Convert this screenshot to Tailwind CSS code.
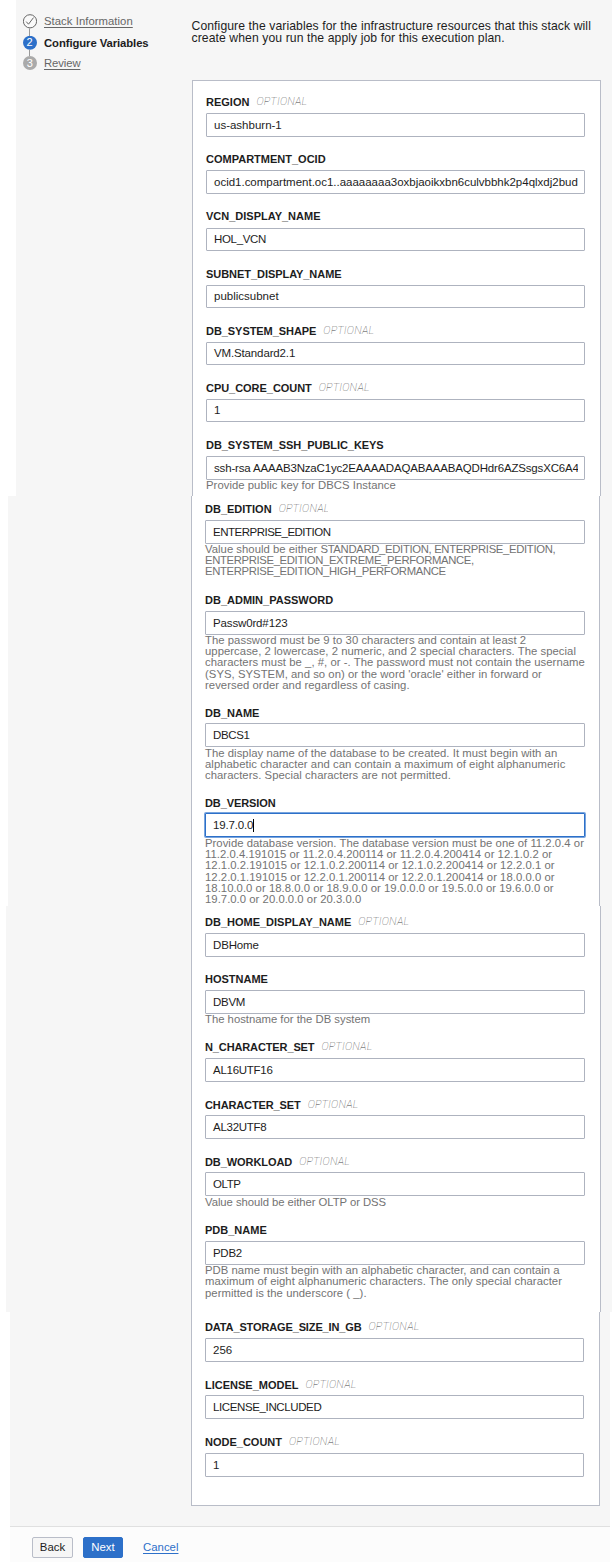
<!DOCTYPE html>
<html lang="en">
<head>
<meta charset="utf-8">
<title>Configure Variables</title>
<script src="https://cdn.jsdelivr.net/npm/@tailwindcss/browser@4"></script>
</head>
<body class="h-[1568px] w-[612px] overflow-hidden bg-white font-['Liberation_Sans',Arial,sans-serif] text-[#1d1d1d]">

<!-- Stack header, steps and first variables -->
<section class="ml-[16px] flex h-[496px] bg-[#f6f6f6]">
  <nav class="w-[175.5px] shrink-0 pl-[7px] pt-[14px]">
    <ol class="text-[11.3px] leading-[14px] text-[#666]">
      <li class="flex h-[22px] gap-[7px]"><svg class="h-[22px] w-[14px] shrink-0" viewBox="0 0 14 22" fill="none" stroke="#666"><path d="M6.5 14.5v7.5" stroke="#999"/><circle cx="7" cy="7.3" r="6.6" fill="#fafafa"/><path d="M3.2 7.6l2.3 2.6 5-6.6"/></svg><a class="tracking-[0.05px] underline underline-offset-2">Stack Information</a></li>
      <li class="flex h-[20px] gap-[7px] font-bold text-[#1d1d1d]"><svg class="h-[20px] w-[14px] shrink-0" viewBox="0 0 14 20"><path d="M6.5 14v6" stroke="#999"/><circle cx="7" cy="6.8" r="7" fill="#2d70c9"/><text x="3.6" y="10.2" font-size="11" font-weight="400" fill="#fff">2</text></svg><span class="tracking-[-0.08px]">Configure Variables</span></li>
      <li class="flex gap-[7px]"><svg class="h-[14px] w-[14px] shrink-0" viewBox="0 0 14 14"><circle cx="7" cy="7" r="7" fill="#aaa"/><text x="3.8" y="10.6" font-size="11" fill="#fff">3</text></svg><a class="tracking-[-0.1px] underline underline-offset-2">Review</a></li>
    </ol>
  </nav>
  <div class="w-[409px]">
    <p class="h-[80px] pt-[20px] whitespace-nowrap text-[12.2px] leading-[12.4px] tracking-[0.085px]">Configure the variables for the infrastructure resources that this stack will<br>create when you run the apply job for this execution plan.</p>
    <div class="h-[416px] border border-b-0 border-[#b9bdc8] bg-white pt-[13px] pl-[13.5px]">
      <div class="h-[57px] w-[379px]"><div class="flex h-[19px] gap-[7px] text-[11px] leading-[16px]"><b>REGION</b><i class="font-['Roboto'] font-thin leading-[15px] tracking-[0.2px] text-[#444]">OPTIONAL</i></div><div class="h-[24px] overflow-hidden rounded-[1px] border border-[#aeb3bf] bg-white px-[7px] text-[11.5px] leading-[23px] whitespace-nowrap">us-ashburn-1</div></div>
      <div class="h-[58px] w-[379px]"><div class="flex h-[19px] gap-[7px] text-[11px] leading-[16px]"><b>COMPARTMENT_OCID</b></div><div class="h-[24px] overflow-hidden rounded-[1px] border border-[#aeb3bf] bg-white px-[7px] text-[11.5px] leading-[23px] tracking-[-0.01px] whitespace-nowrap">ocid1.compartment.oc1..aaaaaaaa3oxbjaoikxbn6culvbbhk2p4qlxdj2bud</div></div>
      <div class="h-[57px] w-[379px]"><div class="flex h-[19px] gap-[7px] text-[11px] leading-[15px]"><b>VCN_DISPLAY_NAME</b></div><div class="h-[23px] overflow-hidden rounded-[1px] border border-[#aeb3bf] bg-white px-[7px] text-[11.5px] leading-[21px] tracking-[-0.33px] whitespace-nowrap">HOL_VCN</div></div>
      <div class="h-[57px] w-[379px]"><div class="flex h-[19px] gap-[7px] text-[11px] leading-[16px]"><b class="tracking-[-0.05px]">SUBNET_DISPLAY_NAME</b></div><div class="h-[23px] overflow-hidden rounded-[1px] border border-[#aeb3bf] bg-white px-[7px] text-[11.5px] leading-[21px] whitespace-nowrap">publicsubnet</div></div>
      <div class="h-[57px] w-[379px]"><div class="flex h-[19px] gap-[7px] text-[11px] leading-[16px]"><b class="tracking-[-0.06px]">DB_SYSTEM_SHAPE</b><i class="font-['Roboto'] font-thin leading-[15px] tracking-[0.2px] text-[#444]">OPTIONAL</i></div><div class="h-[23px] overflow-hidden rounded-[1px] border border-[#aeb3bf] bg-white px-[7px] text-[11.5px] leading-[21px] tracking-[-0.14px] whitespace-nowrap">VM.Standard2.1</div></div>
      <div class="h-[57px] w-[379px]"><div class="flex h-[19px] gap-[7px] text-[11px] leading-[16px]"><b class="tracking-[-0.04px]">CPU_CORE_COUNT</b><i class="font-['Roboto'] font-thin leading-[15px] tracking-[0.2px] text-[#444]">OPTIONAL</i></div><div class="h-[23px] overflow-hidden rounded-[1px] border border-[#aeb3bf] bg-white px-[7px] text-[11.5px] leading-[21px] whitespace-nowrap">1</div></div>
      <div class="w-[379px]"><div class="flex h-[19px] gap-[7px] text-[11px] leading-[16px]"><b class="tracking-[-0.06px]">DB_SYSTEM_SSH_PUBLIC_KEYS</b></div><div class="h-[24px] overflow-hidden rounded-[1px] border border-[#aeb3bf] bg-white pr-[6px] pl-[7px] text-[11.5px] leading-[23px] tracking-[-0.17px] whitespace-nowrap"><div class="overflow-hidden">ssh-rsa AAAAB3NzaC1yc2EAAAADAQABAAABAQDHdr6AZSsgsXC6A4J</div></div><p class="text-[11.3px] leading-[11.2px] tracking-[0.04px] whitespace-nowrap text-[#737373]">Provide public key for DBCS Instance</p></div>
    </div>
  </div>
</section>

<!-- Database edition, password, name and version -->
<section class="ml-[8px] flex h-[410px] bg-[#f6f6f6] pl-[183px]">
  <div class="w-[409px] border-x border-[#b9bdc8] bg-white pt-[5px] pl-[13px]">
    <div class="h-[91px] w-[380px]"><div class="flex h-[19px] gap-[7px] text-[11px] leading-[16px]"><b>DB_EDITION</b><i class="w-[49px] overflow-hidden font-['Roboto'] font-thin leading-[15px] tracking-[0.2px] text-[#444]">OPTIONAL</i></div><div class="h-[24px] overflow-hidden rounded-[1px] border border-[#aeb3bf] bg-white px-[7px] text-[11.5px] leading-[23px] tracking-[-0.5px] whitespace-nowrap">ENTERPRISE_EDITION</div><p class="text-[11.3px] leading-[11.2px] tracking-[-0.35px] whitespace-nowrap text-[#737373]"><span class="tracking-[0.03px]">Value should be either </span><span class="tracking-[-0.33px]">STANDARD_EDITION, ENTERPRISE_EDITION,</span><br>ENTERPRISE_EDITION_EXTREME_PERFORMANCE,<br>ENTERPRISE_EDITION_HIGH_PERFORMANCE</p></div>
    <div class="h-[112px] w-[380px]"><div class="flex h-[19px] gap-[7px] text-[11px] leading-[16px]"><b>DB_ADMIN_PASSWORD</b></div><div class="h-[24px] overflow-hidden rounded-[1px] border border-[#aeb3bf] bg-white px-[7px] text-[11.5px] leading-[22px] tracking-[-0.14px] whitespace-nowrap">Passw0rd#123</div><p class="text-[11.3px] leading-[11.2px] tracking-[0.045px] whitespace-nowrap text-[#737373]">The password must be 9 to 30 characters and contain at least 2<br>uppercase, 2 lowercase, 2 numeric, and 2 special characters. The special<br>characters must be _, #, or -. The password must not contain the username<br>(SYS, SYSTEM, and so on) or the word 'oracle' either in forward or<br>reversed order and regardless of casing.</p></div>
    <div class="h-[90px] w-[380px]"><div class="flex h-[19px] gap-[7px] text-[11px] leading-[18px]"><b>DB_NAME</b></div><div class="h-[24px] overflow-hidden rounded-[1px] border border-[#aeb3bf] bg-white px-[7px] text-[11.5px] leading-[23px] tracking-[-0.35px] whitespace-nowrap">DBCS1</div><p class="pt-px text-[11.3px] leading-[11.2px] tracking-[0.045px] whitespace-nowrap text-[#737373]">The display name of the database to be created. It must begin with an<br>alphabetic character and can contain a maximum of eight alphanumeric<br>characters. Special characters are not permitted.</p></div>
    <div class="w-[380px]"><div class="flex h-[19px] gap-[7px] text-[11px] leading-[18px]"><b class="tracking-[-0.1px]">DB_VERSION</b></div><div class="flex h-[24px] items-center rounded-[1px] border border-[#2d70c9] bg-white px-[7px] text-[11.5px] leading-[23px] tracking-[-0.15px] whitespace-nowrap shadow-[0_0_0_1px_#79a5de]">19.7.0.0<span class="h-[13px] w-px bg-black"></span></div><p class="pt-px text-[11.3px] leading-[11.2px] tracking-[0.035px] whitespace-nowrap text-[#737373]">Provide database version. The database version must be one of 11.2.0.4 or<br>11.2.0.4.191015 or 11.2.0.4.200114 or 11.2.0.4.200414 or 12.1.0.2 or<br>12.1.0.2.191015 or 12.1.0.2.200114 or 12.1.0.2.200414 or 12.2.0.1 or<br>12.2.0.1.191015 or 12.2.0.1.200114 or 12.2.0.1.200414 or 18.0.0.0 or<br>18.10.0.0 or 18.8.0.0 or 18.9.0.0 or 19.0.0.0 or 19.5.0.0 or 19.6.0.0 or<br>19.7.0.0 or 20.0.0.0 or 20.3.0.0</p></div>
  </div>
</section>

<!-- Home, host, character sets, workload and PDB -->
<section class="ml-[6px] flex h-[406px] bg-[#f6f6f6] pl-[185px]">
  <div class="w-[410px] border-x border-[#b9bdc8] bg-white pt-[8px] pl-[13px]">
    <div class="h-[57px] w-[380px]"><div class="flex h-[19px] gap-[7px] text-[11px] leading-[16px]"><b>DB_HOME_DISPLAY_NAME</b><i class="font-['Roboto'] font-thin leading-[16px] tracking-[0.2px] text-[#444]">OPTIONAL</i></div><div class="h-[24px] overflow-hidden rounded-[1px] border border-[#aeb3bf] bg-white px-[7px] text-[11.5px] leading-[23px] tracking-[-0.15px] whitespace-nowrap">DBHome</div></div>
    <div class="h-[68px] w-[380px]"><div class="flex h-[19px] gap-[7px] text-[11px] leading-[16px]"><b>HOSTNAME</b></div><div class="h-[24px] overflow-hidden rounded-[1px] border border-[#aeb3bf] bg-white px-[7px] text-[11.5px] leading-[23px] tracking-[-0.3px] whitespace-nowrap">DBVM</div><p class="text-[11.3px] leading-[11.2px] whitespace-nowrap text-[#737373]">The hostname for the DB system</p></div>
    <div class="h-[57px] w-[380px]"><div class="flex h-[19px] gap-[7px] text-[11px] leading-[17px]"><b class="tracking-[-0.12px]">N_CHARACTER_SET</b><i class="font-['Roboto'] font-thin leading-[16px] tracking-[0.2px] text-[#444]">OPTIONAL</i></div><div class="h-[24px] overflow-hidden rounded-[1px] border border-[#aeb3bf] bg-white px-[7px] text-[11.5px] leading-[23px] tracking-[-0.27px] whitespace-nowrap">AL16UTF16</div></div>
    <div class="h-[57px] w-[380px]"><div class="flex h-[19px] gap-[7px] text-[11px] leading-[18px]"><b class="tracking-[-0.12px]">CHARACTER_SET</b><i class="font-['Roboto'] font-thin leading-[17px] tracking-[0.2px] text-[#444]">OPTIONAL</i></div><div class="h-[24px] overflow-hidden rounded-[1px] border border-[#aeb3bf] bg-white px-[7px] text-[11.5px] leading-[23px] tracking-[-0.27px] whitespace-nowrap">AL32UTF8</div></div>
    <div class="h-[69px] w-[380px]"><div class="flex h-[19px] gap-[7px] text-[11px] leading-[18px]"><b class="tracking-[-0.08px]">DB_WORKLOAD</b><i class="font-['Roboto'] font-thin leading-[17px] tracking-[0.2px] text-[#444]">OPTIONAL</i></div><div class="h-[24px] overflow-hidden rounded-[1px] border border-[#aeb3bf] bg-white px-[7px] text-[11.5px] leading-[23px] tracking-[-0.4px] whitespace-nowrap">OLTP</div><p class="pt-px text-[11.3px] leading-[11.2px] tracking-[-0.05px] whitespace-nowrap text-[#737373]">Value should be either OLTP or DSS</p></div>
    <div class="w-[380px]"><div class="flex h-[19px] gap-[7px] text-[11px] leading-[17px]"><b>PDB_NAME</b></div><div class="h-[24px] overflow-hidden rounded-[1px] border border-[#aeb3bf] bg-white px-[7px] text-[11.5px] leading-[23px] tracking-[-0.3px] whitespace-nowrap">PDB2</div><p class="text-[11.3px] leading-[11.3px] tracking-[0.045px] whitespace-nowrap text-[#737373]">PDB name must begin with an alphabetic character, and can contain a<br>maximum of eight alphanumeric characters. The only special character<br>permitted is the underscore ( _).</p></div>
  </div>
</section>

<!-- Storage, license and node count -->
<section class="mr-[2px] ml-[10px] h-[214px] bg-[#f6f6f6] pl-[181px]">
  <div class="h-[194px] w-[409px] border border-t-0 border-[#b9bdc8] bg-white pt-[7px] pl-[13px]">
    <div class="h-[57px] w-[379px]"><div class="flex h-[19px] gap-[7px] text-[11px] leading-[16px]"><b class="tracking-[-0.13px]">DATA_STORAGE_SIZE_IN_GB</b><i class="font-['Roboto'] font-thin leading-[16px] tracking-[0.2px] text-[#444]">OPTIONAL</i></div><div class="h-[24px] overflow-hidden rounded-[1px] border border-[#aeb3bf] bg-white px-[7px] text-[11.5px] leading-[23px] whitespace-nowrap">256</div></div>
    <div class="h-[58px] w-[379px]"><div class="flex h-[19px] gap-[7px] text-[11px] leading-[18px]"><b>LICENSE_MODEL</b><i class="font-['Roboto'] font-thin leading-[17px] tracking-[0.2px] text-[#444]">OPTIONAL</i></div><div class="h-[24px] overflow-hidden rounded-[1px] border border-[#aeb3bf] bg-white px-[7px] text-[11.5px] leading-[23px] tracking-[-0.38px] whitespace-nowrap">LICENSE_INCLUDED</div></div>
    <div class="w-[379px]"><div class="flex h-[19px] gap-[7px] text-[11px] leading-[16px]"><b>NODE_COUNT</b><i class="font-['Roboto'] font-thin leading-[15px] tracking-[0.2px] text-[#444]">OPTIONAL</i></div><div class="h-[24px] overflow-hidden rounded-[1px] border border-[#aeb3bf] bg-white px-[7px] text-[11.5px] leading-[23px] whitespace-nowrap">1</div></div>
  </div>
</section>

<!-- Wizard actions -->
<footer class="mr-[2px] ml-[10px] flex h-[36px] border-t border-[#e0e0e0] bg-[#fcfcfc] pt-[10px] pl-[22px] text-[11.4px] leading-[19px]">
  <button class="h-[21px] w-[41px] rounded-[2px] border border-[#b9bdc8] bg-[#f6f6f6]">Back</button>
  <button class="ml-[10px] h-[21px] w-[40px] rounded-[2px] border border-[#2d70c9] bg-[#2d70c9] text-white">Next</button>
  <a class="ml-[20px] pt-[1px] text-[#2d70c9] underline underline-offset-2">Cancel</a>
</footer>
</body>
</html>
